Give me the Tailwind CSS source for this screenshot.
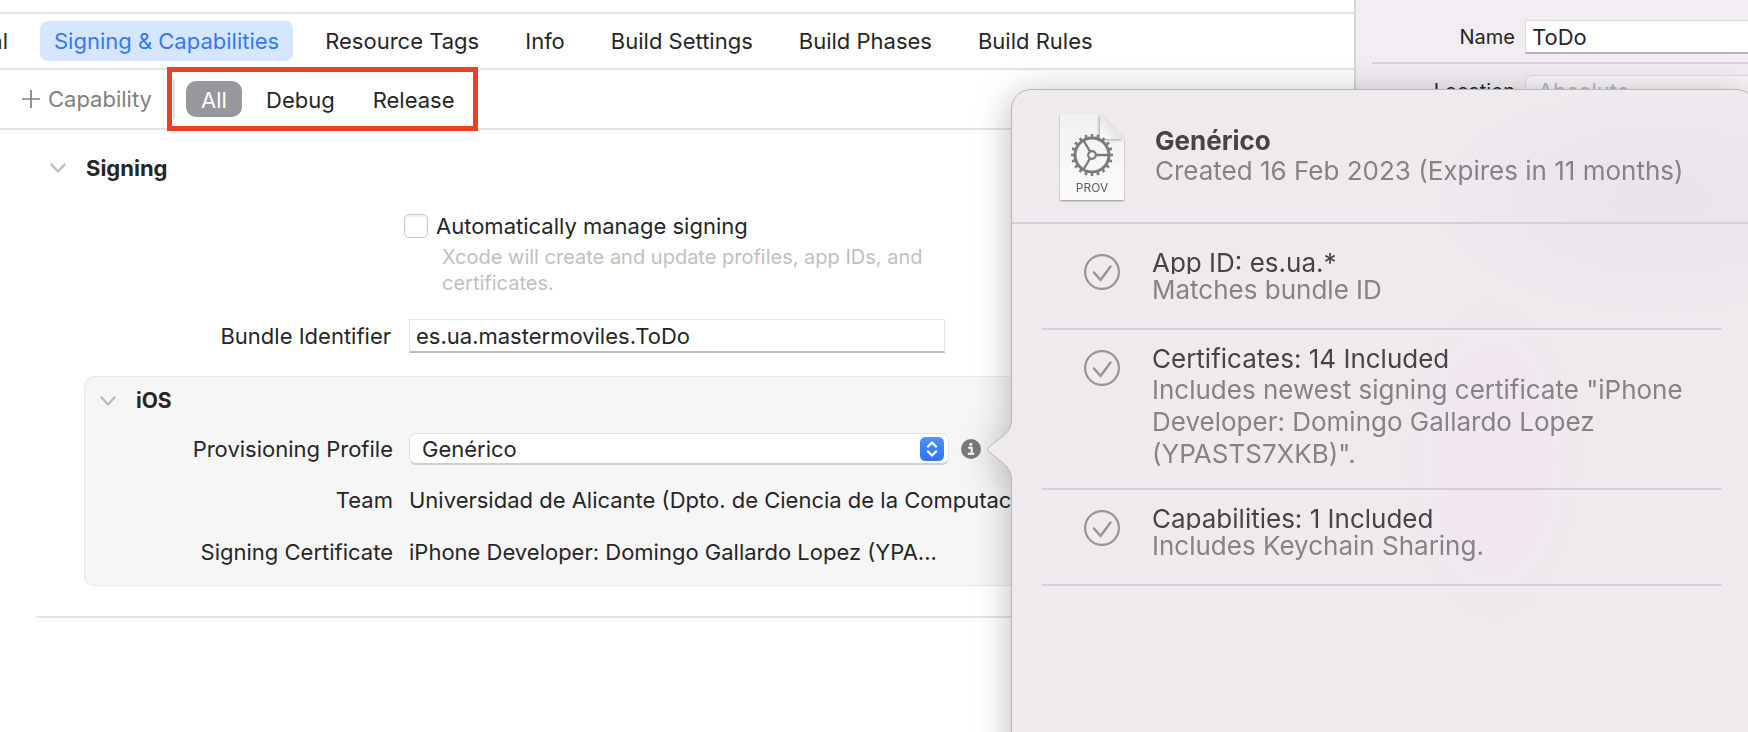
<!DOCTYPE html>
<html lang="en">
<head>
<meta charset="utf-8">
<meta name="viewport" content="width=device-width, initial-scale=1">
<title>Signing &amp; Capabilities</title>
<script src="https://cdn.jsdelivr.net/npm/@tailwindcss/browser@4"></script>
</head>
<body class="bg-white font-[Inter,sans-serif] text-[22px] leading-7 text-[#262626]">
<div class="relative flex min-h-screen overflow-hidden">

  <main class="min-w-0 flex-1">
    <div class="h-3"></div>
    <nav aria-label="Project editor" class="flex h-[58px] items-center gap-[18px] overflow-hidden border-y-2 border-[#e4e4e4] whitespace-nowrap">
      <div class="flex w-[22px] shrink-0 justify-end overflow-hidden"><button class="pr-3.5">General</button></div>
      <button aria-current="page" class="h-10 rounded-lg bg-[#d6e6fe] px-3.5 text-[#3478f6]">Signing &amp; Capabilities</button>
      <button class="h-10 px-3.5">Resource Tags</button>
      <button class="h-10 px-3.5">Info</button>
      <button class="h-10 px-3.5">Build Settings</button>
      <button class="h-10 px-3.5">Build Phases</button>
      <button class="h-10 px-3.5">Build Rules</button>
    </nav>

    <div class="flex h-[60px] items-center border-b-2 border-[#e4e4e4] pl-[22px] whitespace-nowrap">
      <button class="flex w-[145px] items-center gap-2 text-[#808080]">
        <svg class="size-[18px]" viewBox="0 0 18 18" fill="none" stroke="currentColor" stroke-width="1.7" aria-hidden="true"><path d="M9 0v18M0 9h18"/></svg>
        Capability
      </button>
      <div class="relative flex h-full w-[311px] items-center pl-1.5">
        <div class="h-10 w-0.5 bg-[#e0e0e0]"></div>
        <div role="group" aria-label="Configuration" class="ml-[11px] flex items-center gap-3">
          <button aria-pressed="true" class="h-9 w-14 rounded-[10px] bg-[#98979c] pt-0.5 text-white">All</button>
          <button class="h-9 px-3 pt-0.5">Debug</button>
          <button class="h-9 px-3.5 pt-0.5">Release</button>
        </div>
        <div class="pointer-events-none absolute inset-x-0 -top-[3px] -bottom-[3px] border-[5px] border-[#ea4025]"></div>
      </div>
    </div>

    <section class="pl-9">
      <h2 class="flex h-[76px] items-center gap-5 pl-3.5 font-bold">
        <svg class="h-2.5 w-4" viewBox="0 0 16 10" fill="none" stroke="#bdbdbd" stroke-width="2.4" stroke-linecap="round" stroke-linejoin="round" aria-hidden="true"><path d="M1.5 1.5 8 8.5 14.5 1.5"/></svg>
        Signing
      </h2>

      <div class="mt-2 pl-[368px]">
        <label class="flex h-6 items-center gap-2">
          <input type="checkbox" class="size-6 appearance-none rounded-[5px] border border-[#c6c6c6] bg-white shadow-[inset_0_2px_2px_#00000012]">
          Automatically manage signing
        </label>
        <p class="mt-1.5 ml-[38px] w-[510px] text-[20px] leading-[26px] text-[#bfbfbf]">Xcode will create and update profiles, app IDs, and certificates.</p>
      </div>

      <div class="mt-[23px] flex items-center">
        <label for="bundle" class="w-[355px] text-right">Bundle Identifier</label>
        <input id="bundle" type="text" value="es.ua.mastermoviles.ToDo" class="ml-[18px] h-[34px] w-[536px] border border-b-2 border-[#e6e6e6] border-b-[#bdbdbd] bg-white px-1.5">
      </div>

      <div class="mt-[23px] ml-12 h-[210px] rounded-[10px] border border-[#e9e9e9] bg-[#f6f6f6]">
        <h3 class="flex h-12 items-center gap-5 pl-[15px] text-[21px] font-bold">
          <svg class="h-2.5 w-4" viewBox="0 0 16 10" fill="none" stroke="#bdbdbd" stroke-width="2.4" stroke-linecap="round" stroke-linejoin="round" aria-hidden="true"><path d="M1.5 1.5 8 8.5 14.5 1.5"/></svg>
          iOS
        </h3>
        <div class="mt-2 flex h-8 items-center">
          <label for="profile" class="w-[308px] text-right">Provisioning Profile</label>
          <div class="relative ml-4 flex items-center">
            <select id="profile" class="h-8 w-[540px] appearance-none rounded-[7px] border border-b-2 border-[#e4e4e4] border-b-[#cfcfcf] bg-white pl-3">
              <option>Genérico</option>
            </select>
            <svg class="pointer-events-none absolute right-[5px] size-6" viewBox="0 0 24 24" fill="none" aria-hidden="true">
              <defs><linearGradient id="stepper" x2="0" y2="1"><stop stop-color="#4b93f9"/><stop offset="1" stop-color="#2f72f5"/></linearGradient></defs>
              <rect width="24" height="24" rx="5.5" fill="url(#stepper)"/>
              <path d="m8 9.500 4-4 4 4M8 14.500l4 4 4-4" stroke="#fff" stroke-width="2.3" stroke-linecap="round" stroke-linejoin="round"/>
            </svg>
          </div>
          <button aria-label="Profile details" class="ml-3">
            <svg class="size-5" viewBox="0 0 20 20" aria-hidden="true"><circle cx="10" cy="10" r="10" fill="#7b7b7b"/><circle cx="9.800" cy="5.300" r="1.600" fill="#fff"/><path d="M7.200 8.700h3.500v6M6.800 14.800h6.400" fill="none" stroke="#fff" stroke-width="1.900"/></svg>
          </button>
        </div>
        <dl class="mt-[9px] whitespace-nowrap">
          <div class="flex h-[52px] items-center"><dt class="w-[308px] text-right">Team</dt><dd class="ml-4">Universidad de Alicante (Dpto. de Ciencia de la Computación</dd></div>
          <div class="flex h-[52px] items-center"><dt class="w-[308px] text-right">Signing Certificate</dt><dd class="ml-4">iPhone Developer: Domingo Gallardo Lopez (YPA...</dd></div>
        </dl>
      </div>
      <hr class="mt-[30px] border-t-2 border-[#e4e4e4]">
    </section>
  </main>

  <aside class="w-[394px] shrink-0 border-l-2 border-[#d6d3d9] bg-[#f1edf3] pl-4 text-[20px]">
    <div class="flex h-16 items-center border-b-2 border-[#d6d3d9] pt-3">
      <label for="name" class="w-[143px] text-right">Name</label>
      <input id="name" type="text" value="ToDo" class="ml-[10px] h-[34px] min-w-0 flex-1 border border-r-0 border-b-2 border-[#dcd9de] border-b-[#b5b3b7] bg-white px-1.5 text-[22px]">
    </div>
    <div class="flex items-center pt-[11px]">
      <label for="location" class="w-[143px] text-right">Location</label>
      <select id="location" class="ml-[10px] h-8 min-w-0 flex-1 appearance-none rounded-l-[7px] border border-r-0 border-[#dfdce1] bg-[#f8f6f9] pl-3 text-[22px] text-[#b9b8bb]">
        <option>Absolute</option>
      </select>
    </div>
  </aside>

  <!-- Profile details popover -->
  <div role="dialog" aria-label="Genérico" class="absolute top-[89px] -right-2 -bottom-10 left-[1011px] rounded-[20px] border border-[#b9b6ba] bg-[#efeaee] bg-[radial-gradient(ellipse_240px_120px_at_650px_110px,#eae3ea,transparent),radial-gradient(ellipse_100px_180px_at_480px_370px,#f1e6ee,transparent)] text-[26px] text-[#454446] drop-shadow-[0_6px_18px_#00000045]">
    <svg class="absolute top-[325px] -left-[26px] h-[68px] w-7" viewBox="0 0 28 68" aria-hidden="true">
      <path d="M28 3H25.5C25.500 13 23 16 17 21L3 32Q0 34.500 3 37L17 48C23 53 25.500 57 25.500 66H28Z" fill="#efeaee"/>
      <path d="M25.500 3C25.500 13 23 16 17 21L3 32Q0 34.500 3 37L17 48C23 53 25.500 57 25.500 66" fill="none" stroke="#b9b6ba"/>
    </svg>

    <header class="flex h-[134px] items-start border-b-2 border-[#d5d0d5] pt-6 pl-[47px]">
      <svg class="h-[88px] w-[66px]" viewBox="0 0 66 88" role="img" aria-label="Provisioning profile">
        <defs>
          <linearGradient id="paper" x2="0" y2="1"><stop stop-color="#f1f1f1"/><stop offset="1" stop-color="#fbfbfb"/></linearGradient>
          <linearGradient id="fold" x1="0" y1="1" x2="1" y2="0"><stop stop-color="#fff"/><stop offset=".5" stop-color="#e4e4e4"/></linearGradient>
          <filter id="soft" x="-20%" y="-20%" width="140%" height="140%"><feDropShadow dx="0" dy="1" stdDeviation=".8" flood-opacity=".4"/></filter>
          <filter id="crease" x="-40%" y="-40%" width="180%" height="180%"><feDropShadow dx="-1" dy="1" stdDeviation="1.6" flood-opacity=".35"/></filter>
        </defs>
        <path d="M1 0H41L65 25V84Q65 86 63 86H3Q1 86 1 84V0Z" fill="url(#paper)" filter="url(#soft)"/>
        <path d="M41 0V23Q41 25 43 25H65Z" fill="url(#fold)" filter="url(#crease)"/>
        <g fill="none" stroke="#7b7b7b">
          <circle cx="33" cy="41" r="17" stroke-width="3"/>
          <circle cx="33" cy="41" r="19.500" stroke-width="3" pathLength="80" stroke-dasharray="1.700 2.300" stroke-dashoffset=".85"/>
          <circle cx="33" cy="41" r="3.800" stroke-width="2.200"/>
          <path d="M37 41H50M31 37.500 24.500 26.500M31 44.500 24.500 55.500" stroke-width="2.400"/>
        </g>
        <text x="33" y="78" text-anchor="middle" font-family="Inter, sans-serif" font-size="12" fill="#5f5f5f">PROV</text>
      </svg>
      <div class="ml-[30px] pt-3 leading-[30px] whitespace-nowrap">
        <h2 class="font-bold">Genérico</h2>
        <p class="text-[#858385]">Created 16 Feb 2023 (Expires in 11 months)</p>
      </div>
    </header>

    <ul class="pt-2.5 pr-[33px] pl-[30px] leading-8">
      <li class="flex h-24 gap-8 border-b-2 border-[#d5d0d5] pt-3 pl-[42px]">
        <svg class="mt-2 size-9 shrink-0" viewBox="0 0 36 36" fill="none" stroke="#979597" stroke-width="2.2" stroke-linecap="round" stroke-linejoin="round" aria-hidden="true"><circle cx="18" cy="18" r="16.900"/><path d="m10 18.500 6.500 7.500 10-13.500" stroke-width="2.5"/></svg>
        <div><h3 class="h-7 overflow-hidden leading-[34px]">App ID: es.ua.*</h3><p class="text-[#858385]">Matches bundle ID</p></div>
      </li>
      <li class="flex h-40 gap-8 border-b-2 border-[#d5d0d5] pt-3 pl-[42px]">
        <svg class="mt-2 size-9 shrink-0" viewBox="0 0 36 36" fill="none" stroke="#979597" stroke-width="2.2" stroke-linecap="round" stroke-linejoin="round" aria-hidden="true"><circle cx="18" cy="18" r="16.900"/><path d="m10 18.500 6.500 7.500 10-13.500" stroke-width="2.5"/></svg>
        <div><h3 class="h-8 leading-[34px]">Certificates: 14 Included</h3><p class="text-[#858385]">Includes newest signing certificate "iPhone Developer: Domingo Gallardo Lopez (YPASTS7XKB)".</p></div>
      </li>
      <li class="flex h-24 gap-8 border-b-2 border-[#d5d0d5] pt-3 pl-[42px]">
        <svg class="mt-2 size-9 shrink-0" viewBox="0 0 36 36" fill="none" stroke="#979597" stroke-width="2.2" stroke-linecap="round" stroke-linejoin="round" aria-hidden="true"><circle cx="18" cy="18" r="16.900"/><path d="m10 18.500 6.500 7.500 10-13.500" stroke-width="2.5"/></svg>
        <div><h3 class="h-7 overflow-hidden leading-[34px]">Capabilities: 1 Included</h3><p class="text-[#858385]">Includes Keychain Sharing.</p></div>
      </li>
    </ul>
  </div>
</div>
</body>
</html>
